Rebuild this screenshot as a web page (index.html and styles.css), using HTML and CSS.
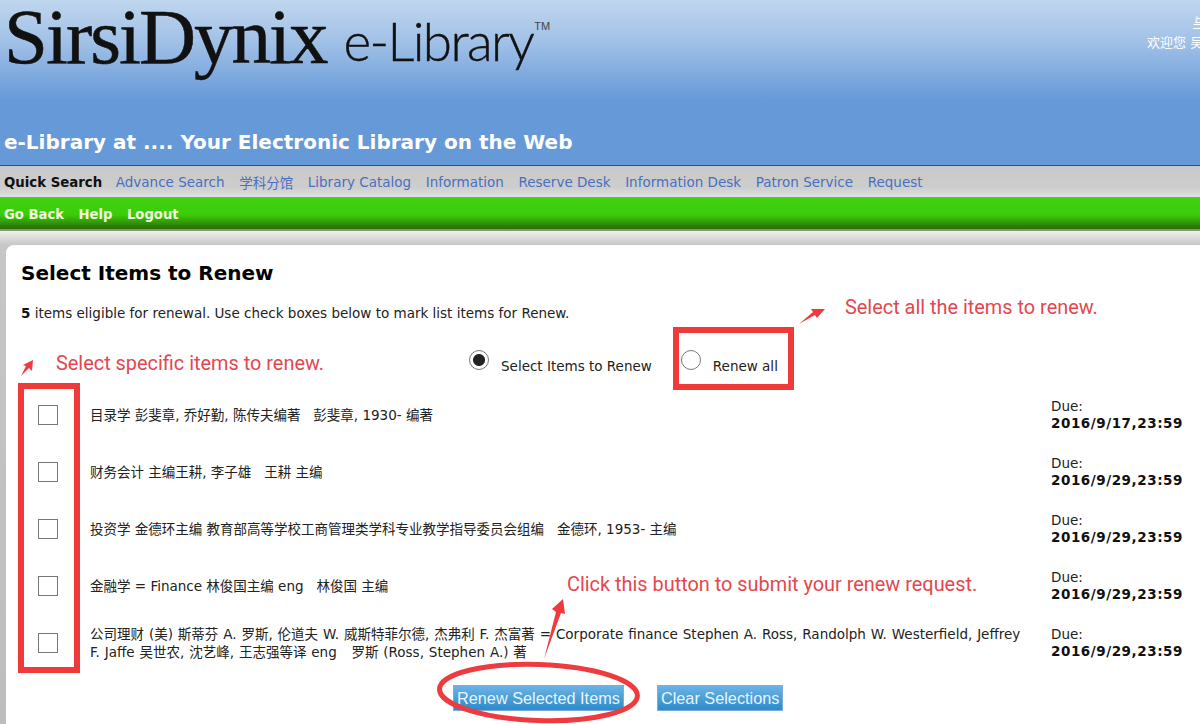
FILE: index.html
```html
<!DOCTYPE html>
<html lang="en">
<head>
    <meta charset="UTF-8">
    <title>SirsiDynix e-Library - Select Items to Renew</title>
    <link rel="stylesheet" href="styles.css">
</head>
<body>
    <div class="header">
        <div class="logo">
            <span class="logo-main">SirsiDynix</span>
            <span class="logo-sub">e-Library</span>
            <span class="logo-tm">TM</span>
        </div>
        <div class="welcome">
            <span class="welcome-top">与</span>
            <span>欢迎您 吴</span>
        </div>
        <div class="tagline">e-Library at .... Your Electronic Library on the Web</div>
    </div>

    <div class="tabs">
        <a class="current">Quick Search</a>
        <a>Advance Search</a>
        <a>学科分馆</a>
        <a>Library Catalog</a>
        <a>Information</a>
        <a>Reserve Desk</a>
        <a>Information Desk</a>
        <a>Patron Service</a>
        <a>Request</a>
    </div>

    <div class="subnav">
        <a>Go Back</a>
        <a>Help</a>
        <a>Logout</a>
    </div>

    <div class="page">
        <div class="panel">
            <h1>Select Items to Renew</h1>
            <p class="intro"><b>5</b> items eligible for renewal. Use check boxes below to mark list items for Renew.</p>

            <div class="modes">
                <label class="mode"><input type="radio" name="mode" checked><span>Select Items to Renew</span></label>
                <label class="mode"><input type="radio" name="mode"><span>Renew all</span></label>
            </div>

            <div class="items">
                <div class="item">
                    <input type="checkbox">
                    <div class="title">目录学 彭斐章, 乔好勤, 陈传夫编著 &nbsp; 彭斐章, 1930- 编著</div>
                    <div class="due">Due:<br><b>2016/9/17,23:59</b></div>
                </div>
                <div class="item">
                    <input type="checkbox">
                    <div class="title">财务会计 主编王耕, 李子雄 &nbsp; 王耕 主编</div>
                    <div class="due">Due:<br><b>2016/9/29,23:59</b></div>
                </div>
                <div class="item">
                    <input type="checkbox">
                    <div class="title">投资学 金德环主编 教育部高等学校工商管理类学科专业教学指导委员会组编 &nbsp; 金德环, 1953- 主编</div>
                    <div class="due">Due:<br><b>2016/9/29,23:59</b></div>
                </div>
                <div class="item">
                    <input type="checkbox">
                    <div class="title">金融学 = Finance 林俊国主编 eng &nbsp; 林俊国 主编</div>
                    <div class="due">Due:<br><b>2016/9/29,23:59</b></div>
                </div>
                <div class="item">
                    <input type="checkbox">
                    <div class="title title-long">公司理财 (美) 斯蒂芬 A. 罗斯, 伦道夫 W. 威斯特菲尔德, 杰弗利 F. 杰富著 = Corporate finance Stephen A. Ross, Randolph W. Westerfield, Jeffrey F. Jaffe 吴世农, 沈艺峰, 王志强等译 eng &nbsp; 罗斯 (Ross, Stephen A.) 著</div>
                    <div class="due">Due:<br><b>2016/9/29,23:59</b></div>
                </div>
            </div>

            <div class="buttons">
                <button>Renew Selected Items</button>
                <button>Clear Selections</button>
            </div>
        </div>
    </div>

    <!-- annotations drawn on top of the screenshot -->
    <div class="note note-all">Select all the items to renew.</div>
    <div class="note note-specific">Select specific items to renew.</div>
    <div class="note note-click">Click this button to submit your renew request.</div>
    <div class="box box-all"></div>
    <div class="box box-items"></div>
    <svg class="marks" width="1200" height="724" viewBox="0 0 1200 724">
        <polygon fill="#ee3b3f" points="799,324 813,312 811,309 825,309 817,318 815,315"/>
        <polygon fill="#ee3b3f" points="21,376 26,366 23,365 33,360 32,371 29,368"/>
        <polygon fill="#ee3b3f" points="544,659 556,612 552,609 563,599 565,614 561,613"/>
        <ellipse cx="538.5" cy="692.5" rx="99" ry="28" fill="none" stroke="#ee3b3f" stroke-width="5" transform="rotate(2 538 692)"/>
    </svg>
</body>
</html>
```

FILE: styles.css
```css
html, body {
    height: 100%;
}

body {
    margin: 0;
    height: 724px;
    overflow: hidden;
    position: relative;
    font-family: "DejaVu Sans", "Noto Sans CJK SC", sans-serif;
    font-size: 13.5px;
    color: #222;
    background-color: #fff;
}

.header {
    height: 166px;
    box-sizing: border-box;
    position: relative;
    display: flex;
    flex-direction: column;
    justify-content: space-between;
    padding: 0 4px 11px;
    background: linear-gradient(#bfd6ee 0, #a3c2e7 40px, #6699d8 100px, #6699d8 100%);
    border-bottom: 1px solid #2f5378;
}

.logo {
    display: flex;
    align-items: flex-start;
    height: 82px;
    color: #111;
}

.logo-main {
    font-family: "Liberation Serif", serif;
    font-size: 79px;
    line-height: 74px;
    letter-spacing: -2px;
    -webkit-text-stroke: 0.5px #111;
}

.logo-sub {
    font-family: "Lato", sans-serif;
    font-weight: 300;
    font-size: 53px;
    line-height: 56px;
    margin: 13px 0 0 17px;
    letter-spacing: -1.6px;
    -webkit-text-stroke: 0.4px #111;
}

.logo-tm {
    font-family: "Liberation Sans", sans-serif;
    font-size: 11px;
    margin: 20px 0 0 1px;
    color: #444;
}

.welcome {
    position: absolute;
    top: 13px;
    left: 1147px;
    white-space: nowrap;
    color: #fff;
    font-size: 13px;
    line-height: 20px;
}

.welcome span {
    display: block;
}

.welcome-top {
    padding-left: 46px;
    text-decoration: underline;
}

.tagline {
    color: #fff;
    font-size: 20px;
    font-weight: bold;
    line-height: 24px;
}

.tabs {
    height: 32px;
    box-sizing: border-box;
    display: flex;
    align-items: center;
    gap: 14.6px;
    padding: 1px 4px 0;
    background: linear-gradient(#c9c9c9 0, #cdcdcd 70%, #e2e2e2 100%);
    border-bottom: 1px solid #8f9a84;
}

.tabs a {
    color: #4a6fc0;
}

.tabs .current {
    color: #111;
    font-size: 13.3px;
    font-weight: bold;
    margin-right: -1px;
}

.subnav {
    height: 33px;
    box-sizing: border-box;
    display: flex;
    align-items: center;
    gap: 14.5px;
    padding: 2px 4px 0;
    font-size: 13.2px;
    background: linear-gradient(#3fd40c 0, #3ccb0b 55%, #2a7c04 92%, #2a6d04 100%);
    border-bottom: 2px solid #85977a;
}

.subnav a {
    color: #f2f7df;
    font-weight: bold;
}

.page {
    padding: 14px 0 0 6px;
    background: linear-gradient(#f0f0ee 0, #c6c6c6 14px, #bdbdbd 100%);
}

.panel {
    height: 500px;
    box-sizing: border-box;
    padding: 16px 0 0 15px;
    background-color: #fff;
    border-top-left-radius: 8px;
}

h1 {
    margin: 0;
    font-size: 20px;
    line-height: 24px;
    color: #000;
}

.intro {
    margin: 20px 0 0;
    line-height: 16px;
}

.intro b {
    color: #111;
}

.modes {
    display: flex;
    gap: 29px;
    margin: 29px 0 0 448px;
    height: 36px;
}

.mode {
    display: flex;
    align-items: flex-start;
    gap: 12px;
}

.mode span {
    margin-top: 8px;
}

input[type="radio"] {
    appearance: none;
    width: 20px;
    height: 20px;
    margin: 0;
    background-color: #fff;
    border: 1.5px solid #777;
    border-radius: 50%;
}

input[type="radio"]:checked {
    background: radial-gradient(circle, #222 0 5.5px, #fff 6.5px);
}

.item {
    height: 57px;
    display: flex;
    align-items: center;
    padding-left: 17px;
}

input[type="checkbox"] {
    appearance: none;
    flex: none;
    width: 20px;
    height: 20px;
    margin: 0;
    background-color: #fff;
    border: 1.5px solid #777;
}

.title {
    width: 932px;
    margin-left: 32px;
    line-height: 18px;
}

.title-long {
    width: 936px;
    margin-right: -4px;
    word-spacing: 0.6px;
}

.due {
    margin-left: 29px;
    line-height: 17px;
}

.due b {
    color: #111;
    letter-spacing: 0.55px;
}

.buttons {
    display: flex;
    gap: 33px;
    margin: 14px 0 0 432px;
}

button {
    height: 26px;
    padding: 0 3px;
    font-family: "Liberation Sans", sans-serif;
    font-size: 16.3px;
    color: #e8f4ff;
    background: linear-gradient(#6cb3e4, #2a8bc9);
    border: 1px solid #79aee0;
}

/* red notes added over the page */
.note {
    position: absolute;
    font-family: "Roboto", sans-serif;
    font-size: 19.9px;
    line-height: 26px;
    color: #e3474f;
    white-space: nowrap;
}

.note-all {
    left: 845px;
    top: 295px;
}

.note-specific {
    left: 56px;
    top: 351px;
}

.note-click {
    left: 567px;
    top: 572px;
}

.box {
    position: absolute;
    box-sizing: border-box;
    border: 6px solid #f03a3a;
}

.box-all {
    left: 673px;
    top: 327px;
    width: 121px;
    height: 63px;
}

.box-items {
    left: 18px;
    top: 383px;
    width: 62px;
    height: 290px;
}

.marks {
    position: absolute;
    left: 0;
    top: 0;
}
```
